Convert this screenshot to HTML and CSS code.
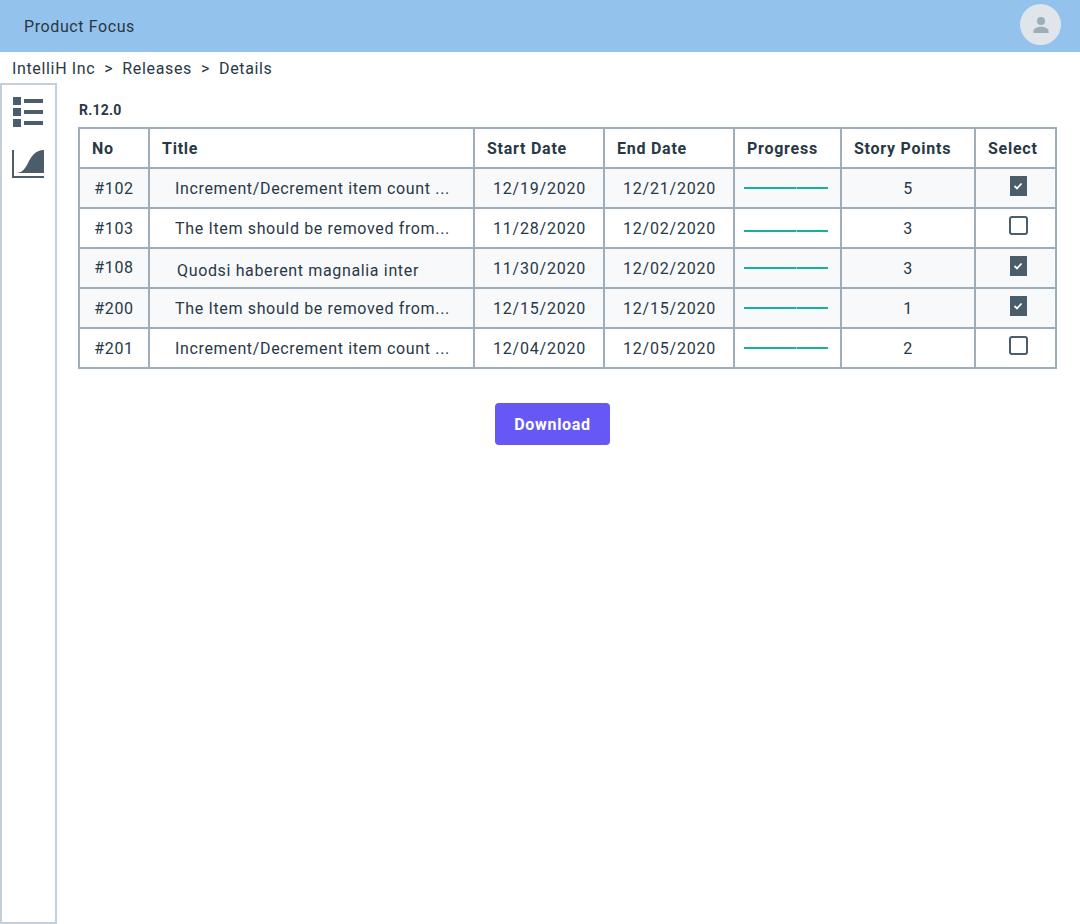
FILE: index.html
```html
<!DOCTYPE html>
<html lang="en">
<head>
<meta charset="utf-8">
<title>Product Focus</title>
<link rel="stylesheet" href="styles.css">
</head>
<body>
<header class="topbar">
  <span class="brand">Product Focus</span>
  <span class="avatar">
    <svg width="16" height="16" viewBox="0 0 18 18"><circle cx="9" cy="4.500" r="4.500" fill="#9eadba"/><path d="M.5 18v-2.500C.5 13 5 11 9 11s8.500 2 8.500 4.500V18z" fill="#9eadba"/></svg>
  </span>
</header>
<nav class="crumbs"><span>IntelliH Inc</span><span class="sep">&gt;</span><span>Releases</span><span class="sep">&gt;</span><span>Details</span></nav>
<div class="body">
  <aside class="side">
    <svg class="icon-list" width="32" height="30" viewBox="0 0 32 30"><g fill="#4b5c6b"><rect x="1" y="0" width="8" height="8"/><rect x="1" y="11" width="8" height="8"/><rect x="1" y="22" width="8" height="8"/><rect x="12" y="2" width="19" height="4"/><rect x="12" y="13" width="19" height="4"/><rect x="12" y="24" width="19" height="4"/></g></svg>
    <svg class="icon-chart" width="32" height="28" viewBox="0 0 32 28"><path d="M1 0v27h31" fill="none" stroke="#4b5c6b" stroke-width="2"/><path d="M4 23C10 23 13 19 16 13S23 0 32 0V23z" fill="#4b5c6b"/></svg>
  </aside>
  <main class="content">
    <h2 class="release">R.12.0</h2>
    <table class="grid">
      <colgroup><col class="c1"><col class="c2"><col class="c3"><col class="c4"><col class="c5"><col class="c6"><col class="c7"></colgroup>
      <thead><tr><th>No</th><th>Title</th><th>Start Date</th><th>End Date</th><th>Progress</th><th>Story Points</th><th>Select</th></tr></thead>
      <tbody>
        <tr class="alt"><td class="no">#102</td><td class="title">Increment/Decrement item count ...</td><td class="date">12/19/2020</td><td class="date">12/21/2020</td><td><div class="bar"></div></td><td class="pts">5</td><td class="sel"><span class="box on"><svg width="10" height="8" viewBox="0 0 10 8"><path d="M1.500 4l2.500 2.500 4.500-5" fill="none" stroke="#fff" stroke-width="1.800"/></svg></span></td></tr>
        <tr><td class="no">#103</td><td class="title">The Item should be removed from...</td><td class="date">11/28/2020</td><td class="date">12/02/2020</td><td><div class="bar low"></div></td><td class="pts">3</td><td class="sel"><span class="box"></span></td></tr>
        <tr class="alt"><td class="no up">#108</td><td class="title wide">Quodsi haberent magnalia inter</td><td class="date">11/30/2020</td><td class="date">12/02/2020</td><td><div class="bar"></div></td><td class="pts">3</td><td class="sel"><span class="box on"><svg width="10" height="8" viewBox="0 0 10 8"><path d="M1.500 4l2.500 2.500 4.500-5" fill="none" stroke="#fff" stroke-width="1.800"/></svg></span></td></tr>
        <tr class="alt"><td class="no">#200</td><td class="title">The Item should be removed from...</td><td class="date">12/15/2020</td><td class="date">12/15/2020</td><td><div class="bar"></div></td><td class="pts">1</td><td class="sel"><span class="box on"><svg width="10" height="8" viewBox="0 0 10 8"><path d="M1.500 4l2.500 2.500 4.500-5" fill="none" stroke="#fff" stroke-width="1.800"/></svg></span></td></tr>
        <tr><td class="no">#201</td><td class="title">Increment/Decrement item count ...</td><td class="date">12/04/2020</td><td class="date">12/05/2020</td><td><div class="bar"></div></td><td class="pts">2</td><td class="sel"><span class="box"></span></td></tr>
      </tbody>
    </table>
    <div class="actions"><button class="download">Download</button></div>
  </main>
</div>
</body>
</html>
```
FILE: styles.css
```css
* { box-sizing: border-box; }
html, body { margin: 0; height: 924px; overflow: hidden; }
body { font-family: Roboto, "Liberation Sans", sans-serif; color: #293845; background: #fff; font-size: 16px; letter-spacing: 0.65px; display: flex; flex-direction: column; }
.topbar { height: 52px; flex: none; background: #93c2ec; display: flex; align-items: center; justify-content: space-between; padding: 0 19px 0 24px; }
.brand { font-size: 16px; letter-spacing: 0.6px; }
.avatar { width: 41px; height: 41px; margin-bottom: 3px; border-radius: 50%; background: #dfe5ea; display: flex; align-items: center; justify-content: center; }
.crumbs { height: 31px; flex: none; padding: 1px 12px 0; display: flex; align-items: center; gap: 9px; font-size: 16px; }
.body { flex: 1; display: flex; min-height: 0; }
.side { width: 57px; flex: none; border: 2px solid #c3cfd9; padding: 12px 0 0 10px; display: flex; flex-direction: column; gap: 23px; }
.side svg { display: block; }
.content { flex: 1; padding: 19px 0 0 21px; }
.release { margin: 0; padding-left: 1px; font-size: 14px; line-height: 16px; font-weight: 700; height: 25px; letter-spacing: 0.2px; }
.grid { border-collapse: collapse; table-layout: fixed; width: 979px; }
.c1 { width: 70px; } .c2 { width: 325px; } .c3 { width: 130px; } .c4 { width: 130px; } .c5 { width: 107px; } .c6 { width: 134px; } .c7 { width: 81px; }
th, td { border: 2px solid #9eadba; height: 40px; padding: 0; font-size: 16px; white-space: nowrap; }
th { text-align: left; padding-left: 12px; font-weight: 700; letter-spacing: 0.75px; }
td { text-align: center; font-weight: 400; }
.alt td { background: #f7f9fa; }
.no.up { padding-bottom: 2px; }
.title { text-align: left; padding-left: 25px; }
.title.wide { padding: 4px 0 0 27px; }
.date { letter-spacing: 0.8px; padding-left: 1px; }
.bar { height: 2px; width: 84px; margin-left: 9px; background: linear-gradient(90deg, #1aae9f 52px, #8cd9cf 52px, #8cd9cf 53px, #1aae9f 53px); }
.bar.low { position: relative; top: 3px; }
.sel { padding-left: 5px; }
.box { display: inline-flex; width: 19px; height: 19px; border: 2px solid #4b5c6b; border-radius: 3px; background: #fff; align-items: center; justify-content: center; vertical-align: middle; position: relative; top: -3px; }
.box.on { width: 17px; height: 20px; background: #4b5c6b; border: 0; border-radius: 0; top: -2px; }
.actions { display: flex; justify-content: center; padding-top: 34px; width: 949px; }
.download { width: 115px; height: 42px; border: 0; border-radius: 4px; background: #6558f5; color: #fff; font: 700 16px Roboto, "Liberation Sans", sans-serif; letter-spacing: 0.7px; }
```
